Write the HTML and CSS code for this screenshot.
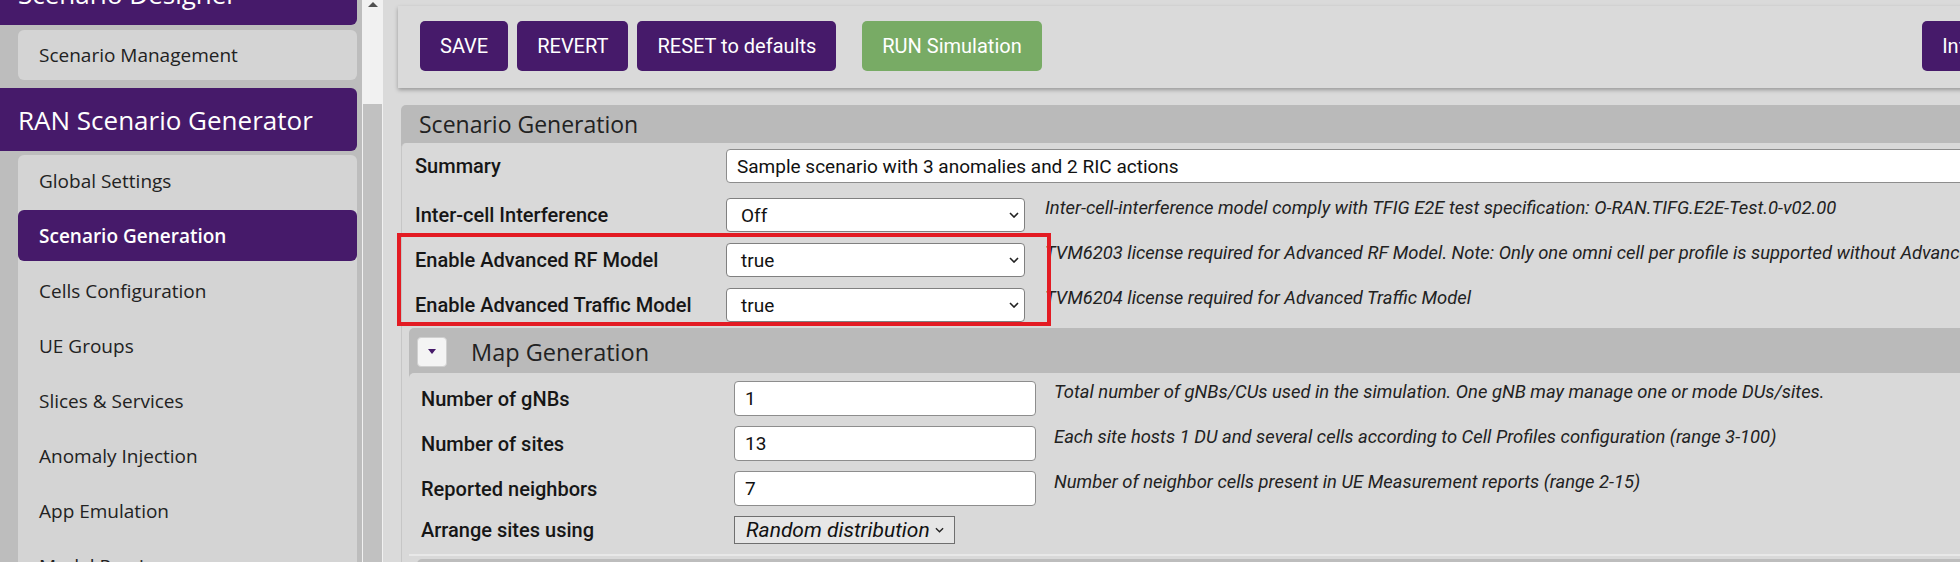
FILE: index.html
```html
<!DOCTYPE html>
<html lang="en">
<head>
<meta charset="utf-8">
<title>RAN Scenario Generator</title>
<link rel="stylesheet" href="styles.css">
</head>
<body>
<div class="app">
  <aside class="sidebar">
    <nav class="nav">
      <div class="nav-head">Scenario Designer</div>
      <ul class="nav-group">
        <li class="nav-item nav-item-short">Scenario Management</li>
      </ul>
      <div class="nav-head">RAN Scenario Generator</div>
      <ul class="nav-group nav-group-long">
        <li class="nav-item">Global Settings</li>
        <li class="nav-item active">Scenario Generation</li>
        <li class="nav-item">Cells Configuration</li>
        <li class="nav-item">UE Groups</li>
        <li class="nav-item">Slices &amp; Services</li>
        <li class="nav-item">Anomaly Injection</li>
        <li class="nav-item">App Emulation</li>
        <li class="nav-item">Model Preview</li>
      </ul>
    </nav>
  </aside>
  <div class="scrollbar">
    <span class="sb-arrow"></span>
    <span class="sb-thumb"></span>
  </div>
  <main class="main">
    <div class="toolbar">
      <button class="btn">SAVE</button>
      <button class="btn">REVERT</button>
      <button class="btn">RESET to defaults</button>
      <button class="btn btn-run">RUN Simulation</button>
      <span class="spacer"></span>
      <button class="btn">Info</button>
    </div>

    <section class="panel panel-main">
      <header class="panel-head">Scenario Generation</header>
      <div class="panel-body">
        <div class="row row-summary">
          <label class="lbl">Summary</label>
          <div class="field field-wide">Sample scenario with 3 anomalies and 2 RIC actions</div>
        </div>
        <div class="row">
          <label class="lbl">Inter-cell Interference</label>
          <div class="select"><span>Off</span><svg class="chev" viewBox="0 0 10 6" width="10" height="6"><path d="M1 1l4 4 4-4" fill="none" stroke="#222" stroke-width="1.6"/></svg></div>
          <p class="desc">Inter-cell-interference model comply with TFIG E2E test specification: O-RAN.TIFG.E2E-Test.0-v02.00</p>
        </div>
        <div class="highlight">
          <div class="row">
            <label class="lbl">Enable Advanced RF Model</label>
            <div class="select"><span>true</span><svg class="chev" viewBox="0 0 10 6" width="10" height="6"><path d="M1 1l4 4 4-4" fill="none" stroke="#222" stroke-width="1.6"/></svg></div>
            <p class="desc">TVM6203 license required for Advanced RF Model. Note: Only one omni cell per profile is supported without Advanced RF Model</p>
          </div>
          <div class="row row-last">
            <label class="lbl">Enable Advanced Traffic Model</label>
            <div class="select"><span>true</span><svg class="chev" viewBox="0 0 10 6" width="10" height="6"><path d="M1 1l4 4 4-4" fill="none" stroke="#222" stroke-width="1.6"/></svg></div>
            <p class="desc">TVM6204 license required for Advanced Traffic Model</p>
          </div>
        </div>

        <section class="panel panel-sub">
          <header class="panel-head sub-head">
            <span class="toggle"><svg viewBox="0 0 8 5" width="8" height="5"><path d="M0 0h8L4 5z" fill="#461a6a"/></svg></span>
            <span>Map Generation</span>
          </header>
          <div class="sub-body">
            <div class="row row-map">
              <label class="lbl">Number of gNBs</label>
              <div class="field">1</div>
              <p class="desc">Total number of gNBs/CUs used in the simulation. One gNB may manage one or mode DUs/sites.</p>
            </div>
            <div class="row row-map">
              <label class="lbl">Number of sites</label>
              <div class="field">13</div>
              <p class="desc">Each site hosts 1 DU and several cells according to Cell Profiles configuration (range 3-100)</p>
            </div>
            <div class="row row-map">
              <label class="lbl">Reported neighbors</label>
              <div class="field">7</div>
              <p class="desc">Number of neighbor cells present in UE Measurement reports (range 2-15)</p>
            </div>
            <div class="row row-map row-last">
              <label class="lbl">Arrange sites using</label>
              <div class="select-alt"><span>Random distribution</span><svg viewBox="0 0 10 6" width="9" height="6"><path d="M1 1l4 4 4-4" fill="none" stroke="#222" stroke-width="1.5"/></svg></div>
            </div>
            <div class="divider"></div>
            <section class="panel panel-nested">
              <header class="panel-head nested-head"></header>
            </section>
          </div>
        </section>
      </div>
    </section>
  </main>
</div>
</body>
</html>
```

FILE: styles.css
```css
* { box-sizing: border-box; }

html, body {
  margin: 0;
  height: 100%;
  overflow: hidden;
}

body {
  background: #dadada;
  font-family: Roboto, "Liberation Sans", sans-serif;
  color: #1b1b1b;
}

.app {
  display: flex;
  height: 562px;
  overflow: hidden;
}

/* ---------- sidebar ---------- */
.sidebar {
  flex: none;
  width: 362px;
  background: #bdbdbd;
  padding-right: 5px;
  overflow: hidden;
  font-family: "Open Sans", "Liberation Sans", sans-serif;
}

.nav { margin-top: -38px; }

.nav-head {
  height: 63px;
  background: #461a6a;
  color: #fff;
  font-size: 26px;
  padding-left: 18px;
  display: flex;
  align-items: center;
  border-radius: 0 6px 6px 0;
}

.nav-group {
  list-style: none;
  margin: 5px 0 8px 18px;
  padding: 0;
  background: #d4d4d4;
  border-radius: 6px;
}

.nav-group-long { margin-top: 4px; }

.nav-item {
  height: 50px;
  display: flex;
  align-items: center;
  padding-left: 21px;
  font-size: 19px;
  color: #222;
}

.nav-group-long .nav-item {
  height: 51px;
  margin-bottom: 4px;
}

.nav-item.active {
  background: #461a6a;
  color: #fff;
  font-weight: 600;
  border-radius: 6px;
}

/* ---------- scrollbar ---------- */
.scrollbar {
  flex: none;
  width: 21px;
  background: #f1f1f1;
  display: flex;
  flex-direction: column;
  align-items: center;
}

.sb-arrow {
  margin-top: 2px;
  width: 0;
  height: 0;
  border-left: 5px solid transparent;
  border-right: 5px solid transparent;
  border-bottom: 5px solid #505050;
}

.sb-thumb {
  margin-top: 97px;
  width: 19px;
  flex: 1;
  background: #c1c1c1;
}

/* ---------- main ---------- */
.main {
  flex: none;
  width: 1636px;
  padding: 6px 0 0 15px;
}

.toolbar {
  display: flex;
  gap: 9px;
  height: 82px;
  padding: 15px 22px;
  background: #dadada;
  box-shadow: 0 2px 4px rgba(0, 0, 0, 0.3);
}

.btn {
  height: 50px;
  padding: 0 20px;
  border: 0;
  border-radius: 5px;
  background: #461a6a;
  color: #fff;
  font-family: Roboto, "Liberation Sans", sans-serif;
  font-size: 20px;
}

.btn-run {
  background: #78ab65;
  margin-left: 17px;
}

.spacer { flex: 1; }

/* ---------- panels ---------- */
.panel {
  background: #bababa;
  border-radius: 5px 5px 0 0;
}

.panel-main {
  margin: 17px 0 0 3px;
  width: 1700px;
}

.panel-head {
  height: 38px;
  display: flex;
  align-items: center;
  padding-left: 18px;
  font-family: "Open Sans", "Liberation Sans", sans-serif;
  font-size: 23px;
  color: #222;
}

.panel-body {
  background: #d9d9d9;
  border-radius: 5px 0 0 0;
  border-left: 1px solid #c6c6c6;
  padding: 6px 0 6px 7px;
}

.row {
  display: grid;
  grid-template-columns: 311px 299px 1fr;
  align-items: start;
  padding-left: 6px;
  margin-bottom: 11px;
}

.row-summary {
  grid-template-columns: 311px 1fr;
  margin-bottom: 15px;
}

.row-last { margin-bottom: 0; }

.lbl {
  align-self: center;
  font-size: 20px;
  font-weight: 500;
  color: #161616;
}

.field {
  height: 35px;
  display: flex;
  align-items: center;
  padding: 0 10px;
  background: #fff;
  border: 1px solid #8d8d8d;
  border-radius: 4px;
  font-size: 19px;
  color: #111;
}

.field-wide { height: 34px; }

.select {
  height: 34px;
  display: flex;
  align-items: center;
  justify-content: space-between;
  padding: 0 5px 0 14px;
  background: #fff;
  border: 1px solid #808080;
  border-radius: 4px;
  font-size: 19px;
  color: #111;
}

.chev { flex: none; }

.desc {
  margin: 0 0 0 20px;
  font-size: 18.4px;
  line-height: 20px;
  font-style: italic;
  color: #222;
  white-space: nowrap;
}

.highlight { position: relative; }

.highlight::after {
  content: "";
  box-sizing: border-box;
  position: absolute;
  left: -12px;
  top: -10px;
  width: 654px;
  height: 93px;
  border: 4px solid #e31b23;
  pointer-events: none;
}

/* ---------- map generation ---------- */
.panel-sub { margin-top: 6px; }

.sub-head {
  height: 45px;
  padding: 2px 0 0 8px;
  gap: 24px;
  font-size: 23.5px;
}

.toggle {
  width: 30px;
  height: 30px;
  display: flex;
  align-items: center;
  justify-content: center;
  background: #f4f4f4;
  border: 1px solid #d0d0d0;
  border-radius: 4px;
}

.sub-body {
  background: #d9d9d9;
  border-radius: 5px 0 0 0;
  padding-top: 8px;
}

.row-map {
  grid-template-columns: 313px 302px 1fr;
  padding-left: 12px;
  margin-bottom: 10px;
}

.row-map .desc {
  margin-left: 18px;
  padding-top: 1px;
}

.select-alt {
  justify-self: start;
  height: 28px;
  display: flex;
  align-items: center;
  gap: 5px;
  padding: 0 10px 0 11px;
  background: #e6e6e6;
  border: 1px solid #6f6f6f;
  font-size: 21px;
  font-style: italic;
  color: #111;
}

.divider {
  margin-top: 6px;
  height: 2px;
  background: #e8e8e8;
}

.panel-nested {
  margin: 3px 0 0 8px;
  background: #bdbdbd;
}

.nested-head { height: 40px; }
```
